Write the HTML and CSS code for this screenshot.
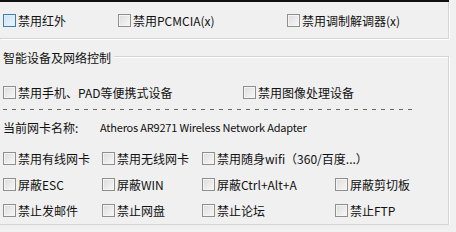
FILE: index.html
```html
<!DOCTYPE html>
<html lang="zh-CN">
<head>
    <meta charset="UTF-8">
    <title>网络控制</title>
    <link rel="stylesheet" href="styles.css">
</head>
<body>

<div class="panel">
    <div class="group-top">
        <div class="row cols-top">
            <label class="opt"><span class="box focus"></span>禁用红外</label>
            <label class="opt"><span class="box"></span>禁用PCMCIA(x)</label>
            <label class="opt"><span class="box"></span>禁用调制解调器(x)</label>
        </div>
    </div>

    <div class="group">
        <div class="group-title">智能设备及网络控制</div>

        <div class="row cols-two">
            <label class="opt"><span class="box"></span>禁用手机、PAD等便携式设备</label>
            <label class="opt"><span class="box"></span>禁用图像处理设备</label>
        </div>

        <div class="dash"></div>

        <div class="row nic">
            <span class="nic-label">当前网卡名称:</span>
            <span class="nic-name">Atheros AR9271 Wireless Network Adapter</span>
        </div>

        <div class="row cols-four">
            <label class="opt"><span class="box"></span>禁用有线网卡</label>
            <label class="opt"><span class="box"></span>禁用无线网卡</label>
            <label class="opt wide"><span class="box"></span>禁用随身wifi（360/百度...）</label>
        </div>
        <div class="row cols-four">
            <label class="opt"><span class="box"></span>屏蔽ESC</label>
            <label class="opt"><span class="box"></span>屏蔽WIN</label>
            <label class="opt"><span class="box"></span>屏蔽Ctrl+Alt+A</label>
            <label class="opt"><span class="box"></span>屏蔽剪切板</label>
        </div>
        <div class="row cols-four">
            <label class="opt"><span class="box"></span>禁止发邮件</label>
            <label class="opt"><span class="box"></span>禁止网盘</label>
            <label class="opt"><span class="box"></span>禁止论坛</label>
            <label class="opt"><span class="box"></span>禁止FTP</label>
        </div>
    </div>
</div>

</body>
</html>
```

FILE: styles.css
```css
body {
    margin: 0;
    background-color: #f0f0f0;
    font-family: "Noto Sans CJK SC", "Liberation Sans", sans-serif;
    font-size: 12px;
    color: #111;
}

.panel {
    width: 449px;
    border-top: 2px solid #111;
}

.group-top {
    height: 36px;
    border-right: 1px solid #d4d4d4;
    border-bottom: 1px solid #d4d4d4;
    box-shadow: 1px 1px 0 #fff;
}

.group-top .row {
    padding-top: 10px;
}

.group {
    margin-top: 17px;
    height: 167px;
    border-top: 1px solid #d4d4d4;
    border-right: 1px solid #d4d4d4;
    border-bottom: 1px solid #d4d4d4;
    box-shadow: 1px 1px 0 #fff, inset 0 1px 0 #fff;
}

.group-title {
    width: fit-content;
    margin-top: -6px;
    padding: 0 3px;
    height: 14px;
    line-height: 14px;
    background-color: #f0f0f0;
}

.row {
    display: grid;
    align-items: center;
    height: 26px;
    padding-left: 3px;
}

.cols-top {
    grid-template-columns: 115px 169px auto;
    height: 16px;
}

.cols-two {
    grid-template-columns: 240px auto;
    margin-top: 14px;
}

.cols-four {
    grid-template-columns: 99px 100px 133px auto;
}

.wide {
    grid-column: span 2;
}

.dash {
    height: 1px;
    width: 411px;
    margin: 4px 0 4px 3px;
    background: repeating-linear-gradient(90deg, #666 0 4px, transparent 4px 9px);
}

.nic {
    grid-template-columns: 97px auto;
    margin-bottom: 5px;
}

.nic-name {
    font-size: 11px;
    letter-spacing: -0.2px;
}

.opt {
    display: flex;
    align-items: center;
    gap: 2px;
    white-space: nowrap;
}

.box {
    box-sizing: border-box;
    width: 13px;
    height: 13px;
    border: 1px solid #8e8f8f;
    background: linear-gradient(135deg, #dcdcdc, #f8f8f8);
    box-shadow: inset 0 0 0 1px #f4f4f4;
    flex-shrink: 0;
}

.box.focus {
    border-color: #3c7fb1;
    background: linear-gradient(135deg, #c9e2f5, #eef6fc);
    box-shadow: inset 0 0 0 1px #deedf8;
}
```
